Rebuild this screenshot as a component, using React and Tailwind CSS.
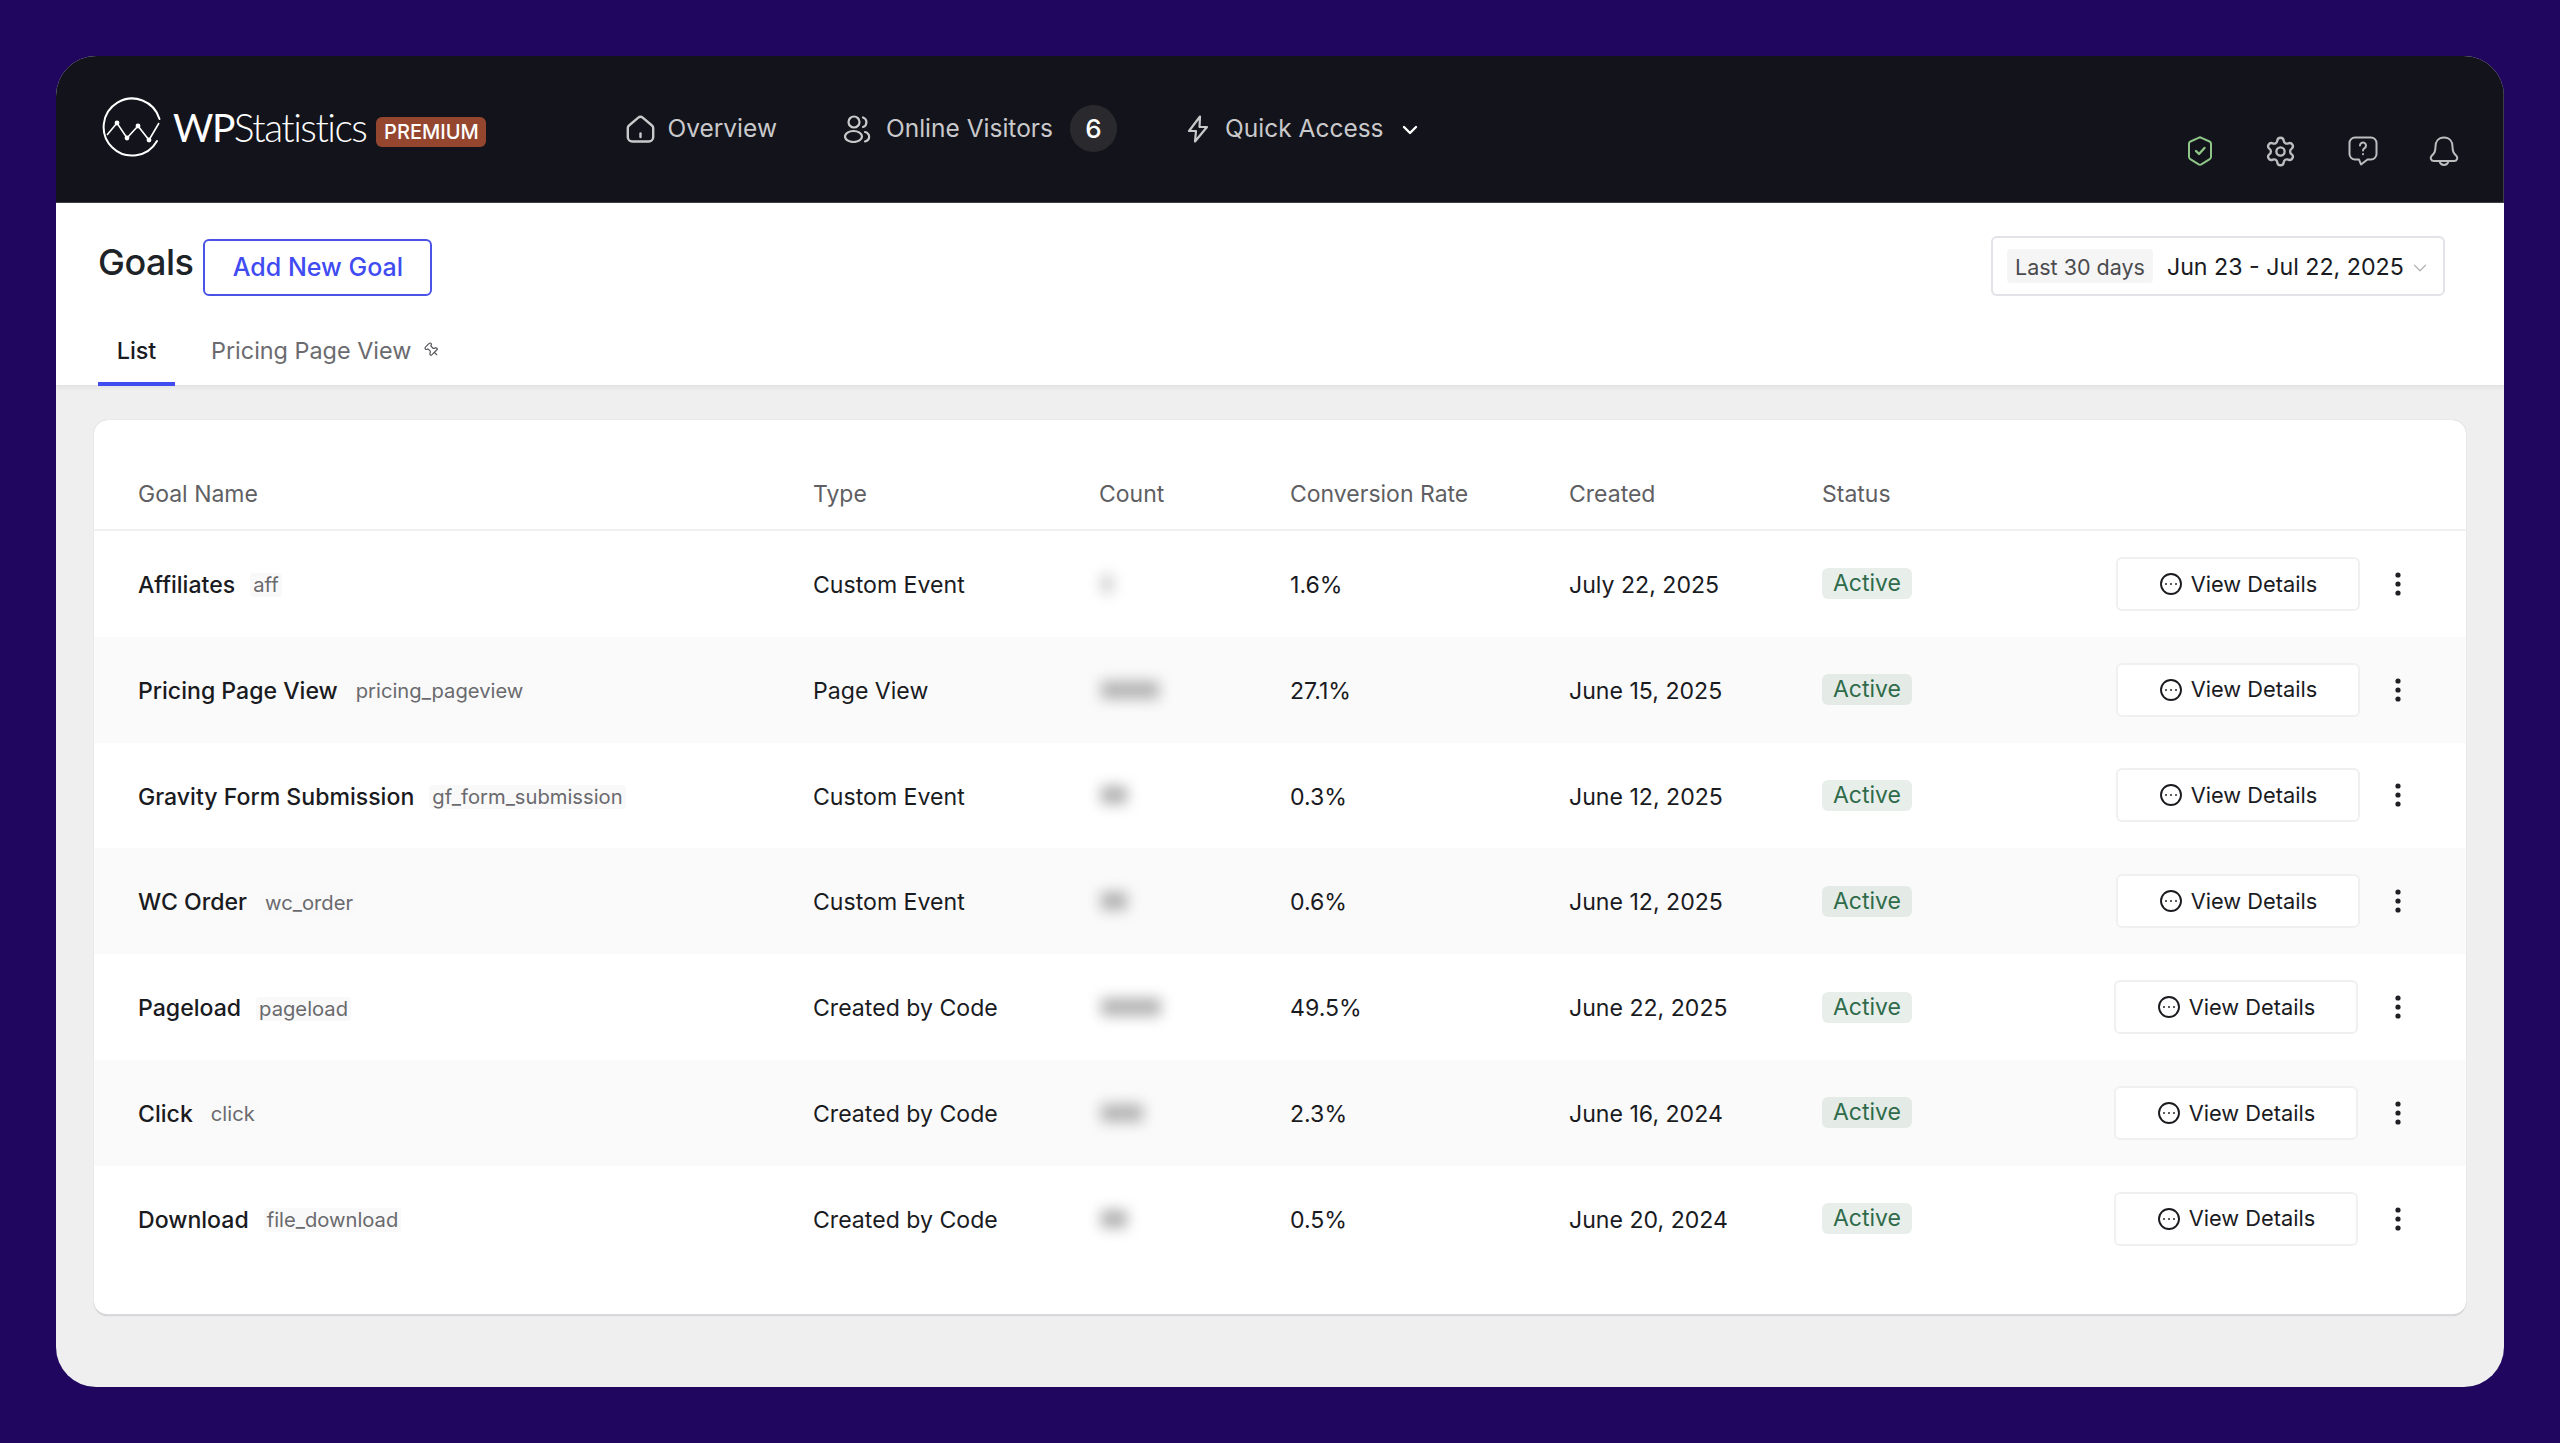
import { ChevronDown, CircleEllipsis, Pin, Settings } from "lucide-react";

const goals = [
  { name: "Affiliates", slug: "aff", type: "Custom Event", blur: "w-[12px] bg-[#cfcfcf]", rate: "1.6%", created: "July 22, 2025" },
  { name: "Pricing Page View", slug: "pricing_pageview", type: "Page View", blur: "w-[58px] bg-[#b4b4b4]", rate: "27.1%", created: "June 15, 2025" },
  { name: "Gravity Form Submission", slug: "gf_form_submission", type: "Custom Event", blur: "w-[26px] bg-[#b0b0b0]", rate: "0.3%", created: "June 12, 2025" },
  { name: "WC Order", slug: "wc_order", type: "Custom Event", blur: "w-[26px] bg-[#b0b0b0]", rate: "0.6%", created: "June 12, 2025" },
  { name: "Pageload", slug: "pageload", type: "Created by Code", blur: "w-[60px] bg-[#b4b4b4]", rate: "49.5%", created: "June 22, 2025", wide: true },
  { name: "Click", slug: "click", type: "Created by Code", blur: "w-[42px] bg-[#b4b4b4]", rate: "2.3%", created: "June 16, 2024", wide: true },
  { name: "Download", slug: "file_download", type: "Created by Code", blur: "w-[26px] bg-[#b0b0b0]", rate: "0.5%", created: "June 20, 2024", wide: true },
];

const Logo = () => (
  <svg width="60" height="60" viewBox="0 0 60 60" fill="none" stroke="white" strokeWidth="2">
    <path d="M57.5 22A28.5 28.5 0 1 0 55 44" strokeLinecap="round" />
    <path d="M5 38 15 26 25 41 36 29 47 43 57 26" strokeWidth="1.6" />
    <circle cx="15" cy="26" r="2.4" fill="white" stroke="none" />
    <circle cx="25" cy="41" r="2.4" fill="white" stroke="none" />
    <circle cx="36" cy="29" r="2.4" fill="white" stroke="none" />
    <circle cx="47" cy="43" r="2.4" fill="white" stroke="none" />
  </svg>
);

const HomeIcon = () => (
  <svg width="29" height="28" viewBox="0 0 29 28" fill="none" stroke="#c9c9cb" strokeWidth="2.4" strokeLinecap="round" strokeLinejoin="round">
    <path d="M3 10.500 12 2.800a3.800 3.800 0 0 1 5 0l9 7.700a3 3 0 0 1 1.200 2.400V22a4.500 4.500 0 0 1-4.500 4.500H6.300A4.500 4.500 0 0 1 1.800 22v-9.100a3 3 0 0 1 1.200-2.400Z" />
    <path d="M14.500 18.500v3.500" />
  </svg>
);

const UsersIcon = () => (
  <svg width="27" height="28" viewBox="0 0 27 28" fill="none" stroke="#c9c9cb" strokeWidth="2.200" strokeLinecap="round">
    <circle cx="10" cy="7" r="5.500" />
    <ellipse cx="9.500" cy="21.500" rx="8.500" ry="5.500" />
    <path d="M19 2.500a5 5 0 0 1 0 9.500M21 17a6 5 0 0 1 0 9.500" />
  </svg>
);

const BoltIcon = () => (
  <svg width="22" height="28" viewBox="0 0 22 28" fill="none" stroke="#c9c9cb" strokeWidth="2.200" strokeLinejoin="round">
    <path d="M13 1.500 2 16h7L8 26.500 20 12h-7.500Z" />
  </svg>
);

const ShieldIcon = () => (
  <svg width="26" height="30" viewBox="0 0 26 30" fill="none" stroke="#8fc587" strokeWidth="2" strokeLinecap="round" strokeLinejoin="round">
    <path d="M11.500 1.800a3 3 0 0 1 3 0l8 3.700a2.500 2.500 0 0 1 1.500 2.300v13a3 3 0 0 1-1.300 2.400l-8 5a3 3 0 0 1-3.400 0l-8-5A3 3 0 0 1 2 20.800v-13a2.500 2.500 0 0 1 1.500-2.300Z" />
    <path d="m9 15 3 3 5.500-6" strokeWidth="2.400" />
  </svg>
);

const HelpIcon = () => (
  <svg width="30" height="30" viewBox="0 0 30 30" fill="none" stroke="#bdbdc0" strokeWidth="2" strokeLinecap="round" strokeLinejoin="round">
    <path d="M7 1.500h16a5.500 5.500 0 0 1 5.500 5.500v11a5.500 5.500 0 0 1-5.500 5.500h-3.500L13 28.500l-2-5H7A5.500 5.500 0 0 1 1.500 18V7A5.500 5.500 0 0 1 7 1.500Z" />
    <path d="M12 9.500a3 3 0 1 1 4.500 2.600c-1 .6-1.500 1.200-1.500 2.400" />
    <path d="M15 18v.2" />
  </svg>
);

const BellIcon = () => (
  <svg width="30" height="31" viewBox="0 0 30 31" fill="none" stroke="#bdbdc0" strokeWidth="2" strokeLinecap="round" strokeLinejoin="round">
    <path d="M15 1.500c-5.500 0-8.500 4-8.500 9 0 5-1 6.500-4 9.500-1.500 1.500-.8 5 2.500 5h20c3.300 0 4-3.500 2.500-5-3-3-4-4.500-4-9.500 0-5-3-9-8.500-9Z" />
    <path d="M10.500 25.500c.8 2.400 2.300 3.500 4.500 3.500s3.700-1.100 4.500-3.500" />
  </svg>
);

const Kebab = () => (
  <svg width="24" height="28" viewBox="0 0 24 28" fill="#1f2024">
    <circle cx="12" cy="5" r="2.600" />
    <circle cx="12" cy="14" r="2.600" />
    <circle cx="12" cy="23" r="2.600" />
  </svg>
);

const GoalRow = ({ goal, striped }) => (
  <div className={`grid h-[105.8px] grid-cols-[675px_286px_191px_279px_253px_1fr] items-center pr-[56px] pl-[44px] text-[23.1px] text-[#1a1b1f] ${striped ? "bg-[#fafafa]" : ""}`}>
    <div className="flex items-center gap-[15px] pt-[3px]">
      <span className="font-medium">{goal.name}</span>
      <span className="rounded-[4px] bg-[#f9f9f9] px-[3px] text-[20.2px] leading-[24px] text-[#6a6a6e]">{goal.slug}</span>
    </div>
    <span className="pt-[3px]">{goal.type}</span>
    <div className={`ml-[2px] h-[18px] blur-[7px] ${goal.blur}`} />
    <span className="pt-[3px]">{goal.rate}</span>
    <span className="pt-[3px]">{goal.created}</span>
    <div className="flex items-center justify-between">
      <span className={`rounded-[6px] px-[11px] text-[23px] leading-[31px] text-[#2f6b4a] ${striped ? "bg-[#e4ebe7]" : "bg-[#e8efeb]"}`}>Active</span>
      <div className="flex items-center gap-[26px]">
        <button className={`flex h-[54px] w-[244px] items-center justify-center gap-[8px] rounded-[6px] border-2 border-[#f0f0f2] bg-white text-[21.8px] text-[#1a1b1f] ${goal.wide ? "mr-[2px]" : ""}`}>
          <CircleEllipsis size={24} strokeWidth={1.9} />
          View Details
        </button>
        <Kebab />
      </div>
    </div>
  </div>
);

export default function App() {
  return (
    <div className="h-[1443px] w-[2560px] overflow-hidden bg-[#20065f] pt-[56px] pl-[56px] font-['Inter',sans-serif]">
      <div className="flex h-[1331px] w-[2448px] flex-col overflow-hidden rounded-[40px] bg-[#efefef]">
        <header className="flex h-[147px] shrink-0 border-r border-b border-[#3f3f46] bg-[#13141b] pl-[46px]">
          <div className="mt-[41px] flex h-[60px] items-center">
            <Logo />
            <span className="ml-[11px] font-['Lato',sans-serif] text-[39px] leading-none font-light tracking-[-1.5px] text-white">
              <span className="font-normal">WP</span>Statistics
            </span>
            <span className="mt-[10px] ml-[10px] flex h-[30px] w-[110px] items-center justify-center rounded-[6px] bg-[#95462f] text-[20px] font-medium text-white">PREMIUM</span>
          </div>
          <nav className="mt-[49px] ml-[140px] flex h-[47px] items-center text-[24.5px] text-[#c9c9cb]">
            <HomeIcon />
            <span className="ml-[12px]">Overview</span>
            <span className="ml-[67px]"><UsersIcon /></span>
            <span className="ml-[15px]">Online Visitors</span>
            <span className="ml-[17px] flex h-[47px] w-[47px] items-center justify-center rounded-full bg-[#2a2a2e] text-[26px] font-medium text-white">6</span>
            <span className="ml-[70px]"><BoltIcon /></span>
            <span className="ml-[16px]">Quick Access</span>
            <ChevronDown size={24} strokeWidth={2.4} className="mt-[3px] ml-[14px] text-white" />
          </nav>
          <div className="mt-[79px] mr-[44px] ml-auto flex h-[32px] items-center gap-[51px]">
            <ShieldIcon />
            <Settings size={33} strokeWidth={1.7} className="text-[#bdbdc0]" />
            <HelpIcon />
            <BellIcon />
          </div>
        </header>

        <section className="h-[183px] shrink-0 border-b border-[#e2e2e4] bg-white shadow-[0_2px_4px_rgba(0,0,0,0.05)]">
          <div className="mt-[33px] flex h-[60px] items-center justify-between pr-[59px] pl-[42px]">
            <div className="flex items-center gap-[10px]">
              <h1 className="mb-[8px] text-[36px] font-medium tracking-[-0.5px] text-[#1d2327]">Goals</h1>
              <button className="mt-[2px] h-[57px] w-[229px] rounded-[6px] border-2 border-[#4954e6] pt-[2px] text-[25px] font-medium text-[#404bf2]">Add New Goal</button>
            </div>
            <div className="flex h-[60px] w-[454px] items-center rounded-[6px] border-2 border-[#e2e2e8] pl-[14px]">
              <span className="rounded-[4px] bg-[#f5f5f5] px-[8px] pt-[2px] text-[21.5px] leading-[32px] text-[#4b4b4f]">Last 30 days</span>
              <span className="ml-[14px] pt-[2px] text-[23.2px] text-[#1a1b1f]">Jun 23 - Jul 22, 2025</span>
              <ChevronDown size={22} strokeWidth={1.4} className="mt-[3px] ml-[5px] text-[#b5b5b8]" />
            </div>
          </div>
          <div className="mt-[21px] flex h-[69px] pl-[42px] text-[23.4px]">
            <div className="flex h-[69px] w-[77px] items-center justify-center border-b-4 border-[#404bf2] pt-[2px] font-medium text-[#1a1b1f]">List</div>
            <div className="ml-[36px] flex h-[65px] items-center pt-[2px] text-[#6b6b6f]">
              Pricing Page View
              <Pin size={16} strokeWidth={1.8} className="mb-[2px] ml-[13px] -rotate-45 text-[#55555a]" />
            </div>
          </div>
        </section>

        <main className="px-[38px] pt-[34px]">
          <div className="h-[896px] rounded-[14px] border-b-2 border-[#d9d9dd] bg-white pt-[1px] shadow-[0_0_1px_rgba(0,0,0,0.25)]">
            <div className="grid h-[110px] grid-cols-[675px_286px_191px_279px_253px_1fr] items-end border-b-2 border-[#f0f0f2] pb-[18px] pl-[44px] text-[23px] text-[#5f5f63]">
              <span>Goal Name</span>
              <span>Type</span>
              <span>Count</span>
              <span>Conversion Rate</span>
              <span>Created</span>
              <span>Status</span>
            </div>
            {goals.map((goal, i) => (
              <GoalRow key={goal.slug} goal={goal} striped={i % 2 === 1} />
            ))}
          </div>
        </main>
      </div>
    </div>
  );
}
